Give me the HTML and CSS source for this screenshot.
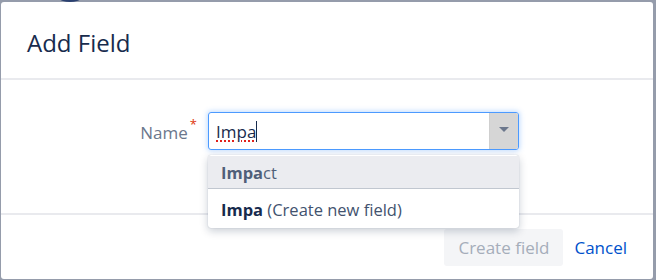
FILE: index.html
```html
<!DOCTYPE html>
<html>
<head>
<meta charset="utf-8">
<link rel="stylesheet" href="styles.css">
</head>
<body>
<div class="bg-mark"></div>
<div class="dialog">
  <div class="header">
    <h2 class="title">Add Field</h2>
  </div>
  <div class="body">
    <div class="row">
      <div class="label">Name<span class="req">*</span></div>
      <div class="field">
        <div class="input-text"><span class="typed">Impa</span><span class="caret"></span></div>
        <div class="arrow-btn"><span class="tri"></span></div>
        <div class="menu">
          <div class="opt opt-active"><b>Impa</b>ct</div>
          <div class="opt opt-new"><b>Impa</b> (Create new field)</div>
        </div>
      </div>
    </div>
  </div>
  <div class="footer">
    <button class="btn-create" disabled>Create field</button>
    <a class="btn-cancel">Cancel</a>
  </div>
</div>
</body>
</html>
```
FILE: styles.css
```css
html, body {
  margin: 0;
  padding: 0;
}
body {
  background: #959cab;
  font-family: "Open Sans", "Noto Sans", sans-serif;
  width: 656px;
  height: 280px;
  overflow: hidden;
  position: relative;
}
.bg-mark {
  position: absolute;
  left: 60px;
  top: -4px;
  width: 20px;
  height: 6px;
  border-radius: 50%;
  background: #2b4170;
}
.dialog {
  position: relative;
  margin: 2px 0 0 1px;
  width: 652px;
  height: 277px;
  background: #fff;
  border-radius: 3px;
  display: flex;
  flex-direction: column;
}
.header {
  height: 76px;
  border-bottom: 2px solid #e9eaee;
  padding-left: 26px;
  display: flex;
  align-items: center;
}
.title {
  margin: 4px 0 0;
  font-size: 24px;
  font-weight: 500;
  color: #172b4d;
}
.body {
  height: 101px;
  padding-top: 32px;
  border-bottom: 2px solid #e9eaee;
}
.row {
  display: flex;
  align-items: center;
}
.label {
  width: 196px;
  text-align: right;
  font-size: 17px;
  color: #6b778c;
  margin-right: 11px;
  padding-top: 2px;
}
.req {
  color: #de350b;
  font-size: 13px;
  vertical-align: top;
  position: relative;
  top: -6px;
  margin-left: 2px;
}
.field {
  position: relative;
  box-sizing: border-box;
  width: 311px;
  height: 38px;
  border: 1px solid #4c9aff;
  border-radius: 3px;
  box-shadow: 0 0 5px 1px rgba(76, 154, 255, 0.35);
  display: flex;
}
.input-text {
  flex: 1;
  display: flex;
  align-items: center;
  padding-left: 7px;
  font-size: 17px;
  color: #172b4d;
}
.typed {
  text-decoration: underline dotted #e0201b;
  text-decoration-thickness: 2px;
  text-underline-offset: 3px;
}
.caret {
  display: inline-block;
  width: 1px;
  height: 21px;
  background: #172b4d;
}
.arrow-btn {
  width: 28px;
  background: #d6d6d6;
  border-left: 1px solid #cfcfcf;
  border-radius: 0 2px 2px 0;
  display: flex;
  align-items: center;
  justify-content: center;
}
.tri {
  width: 0;
  height: 0;
  border-left: 5px solid transparent;
  border-right: 5px solid transparent;
  border-top: 5px solid #6b778c;
  margin-top: -4px;
}
.menu {
  position: absolute;
  top: 42px;
  left: -1px;
  width: 311px;
  background: #fff;
  border-radius: 3px;
  box-shadow: 0 3px 8px rgba(9, 30, 66, 0.22), 0 0 1px rgba(9, 30, 66, 0.3);
  padding: 1px 0 1px;
  z-index: 2;
}
.opt {
  font-size: 16.5px;
  padding-left: 13px;
  display: flex;
  align-items: center;
  white-space: pre;
}
.opt b {
  font-weight: 700;
}
.opt-active {
  height: 32px;
  background: #ebecf0;
  color: #505f79;
  border-bottom: 1px solid #c1c7d0;
  margin-bottom: 2px;
}
.opt-new {
  height: 36px;
  color: #42526e;
}
.opt-new b {
  color: #172b4d;
}
.footer {
  flex: 1;
  display: flex;
  justify-content: flex-end;
  align-items: center;
  padding-right: 26px;
}
.btn-create {
  font-family: inherit;
  width: 119px;
  height: 37px;
  border: none;
  border-radius: 3px;
  background: #f4f5f7;
  color: #a5adba;
  font-size: 17px;
  padding: 0;
}
.btn-cancel {
  margin-left: 11px;
  font-size: 17px;
  color: #0052cc;
}
```
